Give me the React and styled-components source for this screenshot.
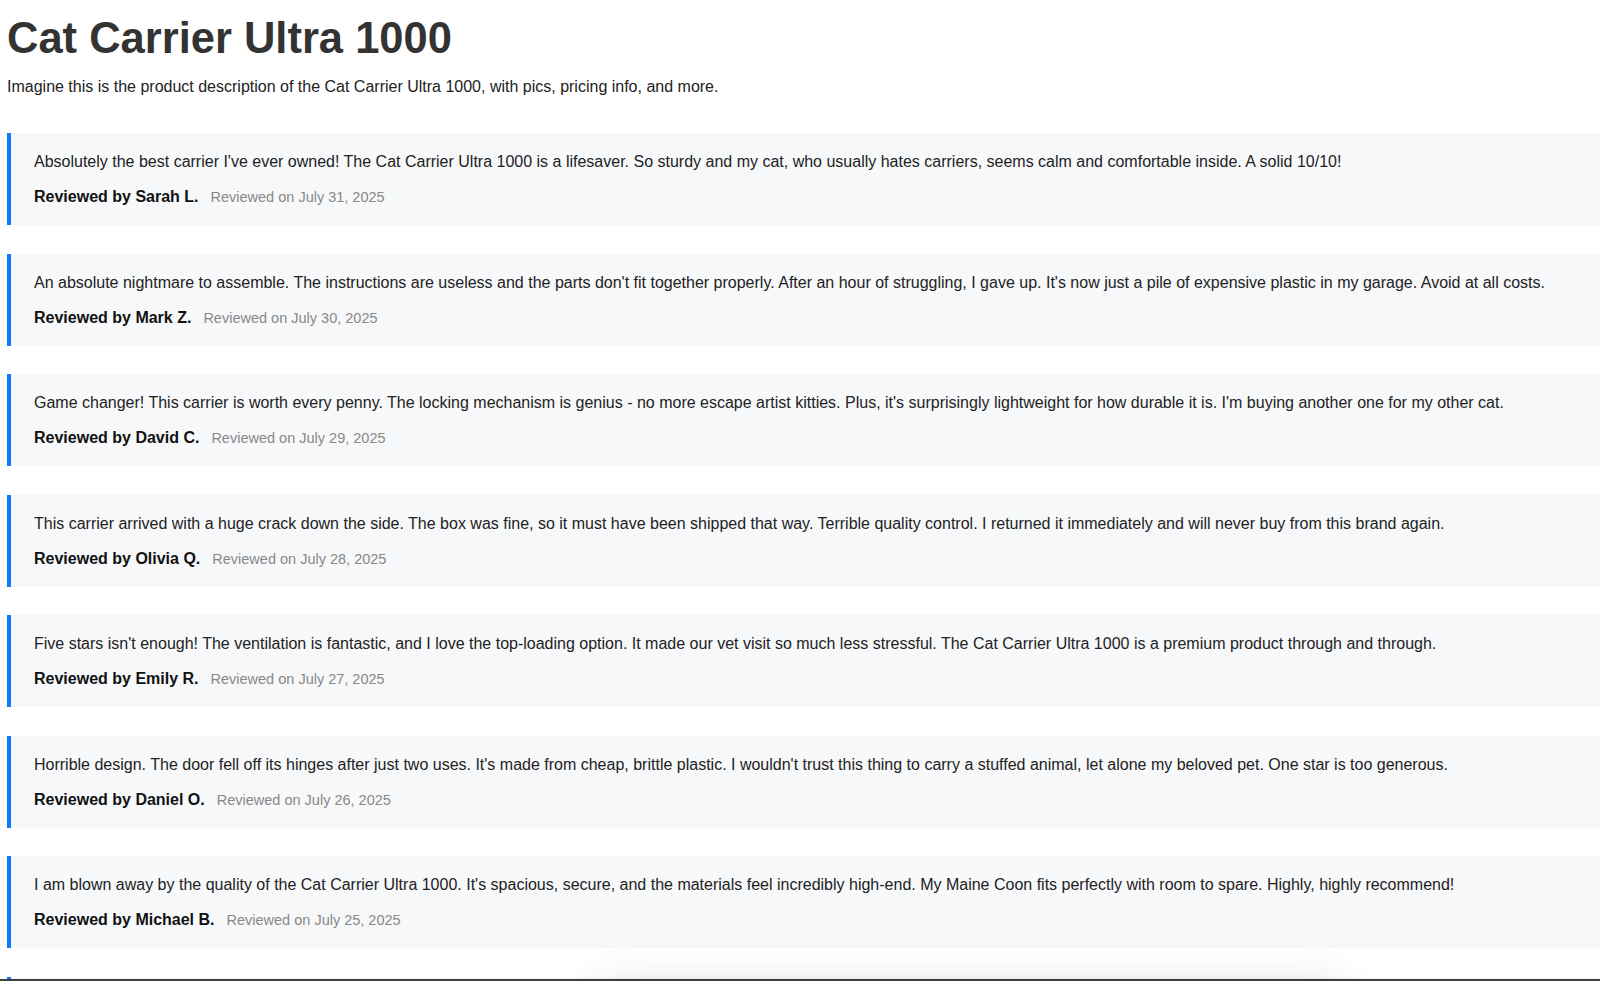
import React from 'react'
import styled, { createGlobalStyle } from 'styled-components'

const GlobalStyle = createGlobalStyle`
body{
    margin:0;
    background:#fff;
    font-family: "Liberation Sans", Arial, sans-serif;
    color:#222;
}
`

const Page = styled.div`
padding: 14px 0 40px 7px;
`

const Title = styled.h1`
font-size: 43.5px;
font-weight: 700;
color: #333;
margin: 0;
line-height: normal;
`

const Description = styled.p`
font-size: 16px;
margin: 15px 0 37px;
color: #222;
`

const ReviewList = styled.div`
display:flex;
flex-direction:column;
gap:28.5px;
`

const ReviewCard = styled.div`
background: #f7f8fa;
border-left: 4px solid #0a7bff;
padding: 20px 24px 19px 23px;
`

const ReviewText = styled.p`
margin: 0 0 17px;
font-size: 16px;
color: #222;
`

const Meta = styled.div`
display:flex;
align-items:baseline;
gap:12px;
`

const Author = styled.span`
font-weight:700;
font-size:16px;
color:#111;
`

const ReviewDate = styled.span`
font-size:14.5px;
color:#888;
`

const BottomBar = styled.div`
position:fixed;
left:0;
right:0;
bottom:0;
height:2px;
background:#3d3d3d;
`

const BottomGlow = styled.div`
position:fixed;
left:590px;
bottom:-60px;
width:760px;
height:60px;
border-radius:30px;
box-shadow: 0 0 40px rgba(0,0,0,0.10);
`

const reviews = [
  { text: "Absolutely the best carrier I've ever owned! The Cat Carrier Ultra 1000 is a lifesaver. So sturdy and my cat, who usually hates carriers, seems calm and comfortable inside. A solid 10/10!", author: 'Sarah L.', date: 'July 31, 2025' },
  { text: "An absolute nightmare to assemble. The instructions are useless and the parts don't fit together properly. After an hour of struggling, I gave up. It's now just a pile of expensive plastic in my garage. Avoid at all costs.", author: 'Mark Z.', date: 'July 30, 2025' },
  { text: "Game changer! This carrier is worth every penny. The locking mechanism is genius - no more escape artist kitties. Plus, it's surprisingly lightweight for how durable it is. I'm buying another one for my other cat.", author: 'David C.', date: 'July 29, 2025' },
  { text: "This carrier arrived with a huge crack down the side. The box was fine, so it must have been shipped that way. Terrible quality control. I returned it immediately and will never buy from this brand again.", author: 'Olivia Q.', date: 'July 28, 2025' },
  { text: "Five stars isn't enough! The ventilation is fantastic, and I love the top-loading option. It made our vet visit so much less stressful. The Cat Carrier Ultra 1000 is a premium product through and through.", author: 'Emily R.', date: 'July 27, 2025' },
  { text: "Horrible design. The door fell off its hinges after just two uses. It's made from cheap, brittle plastic. I wouldn't trust this thing to carry a stuffed animal, let alone my beloved pet. One star is too generous.", author: 'Daniel O.', date: 'July 26, 2025' },
  { text: "I am blown away by the quality of the Cat Carrier Ultra 1000. It's spacious, secure, and the materials feel incredibly high-end. My Maine Coon fits perfectly with room to spare. Highly, highly recommend!", author: 'Michael B.', date: 'July 25, 2025' },
  { text: "Easy to clean and easy to carry. My cat actually walks into it on her own now. Great purchase.", author: 'Jessica T.', date: 'July 24, 2025' },
]

function App() {
  return (
    <Page>
      <GlobalStyle />
      <Title>Cat Carrier Ultra 1000</Title>
      <Description>Imagine this is the product description of the Cat Carrier Ultra 1000, with pics, pricing info, and more.</Description>
      <ReviewList>
        {reviews.map((r) => (
          <ReviewCard key={r.author}>
            <ReviewText>{r.text}</ReviewText>
            <Meta>
              <Author>Reviewed by {r.author}</Author>
              <ReviewDate>Reviewed on {r.date}</ReviewDate>
            </Meta>
          </ReviewCard>
        ))}
      </ReviewList>
      <BottomGlow />
      <BottomBar />
    </Page>
  )
}

export default App
